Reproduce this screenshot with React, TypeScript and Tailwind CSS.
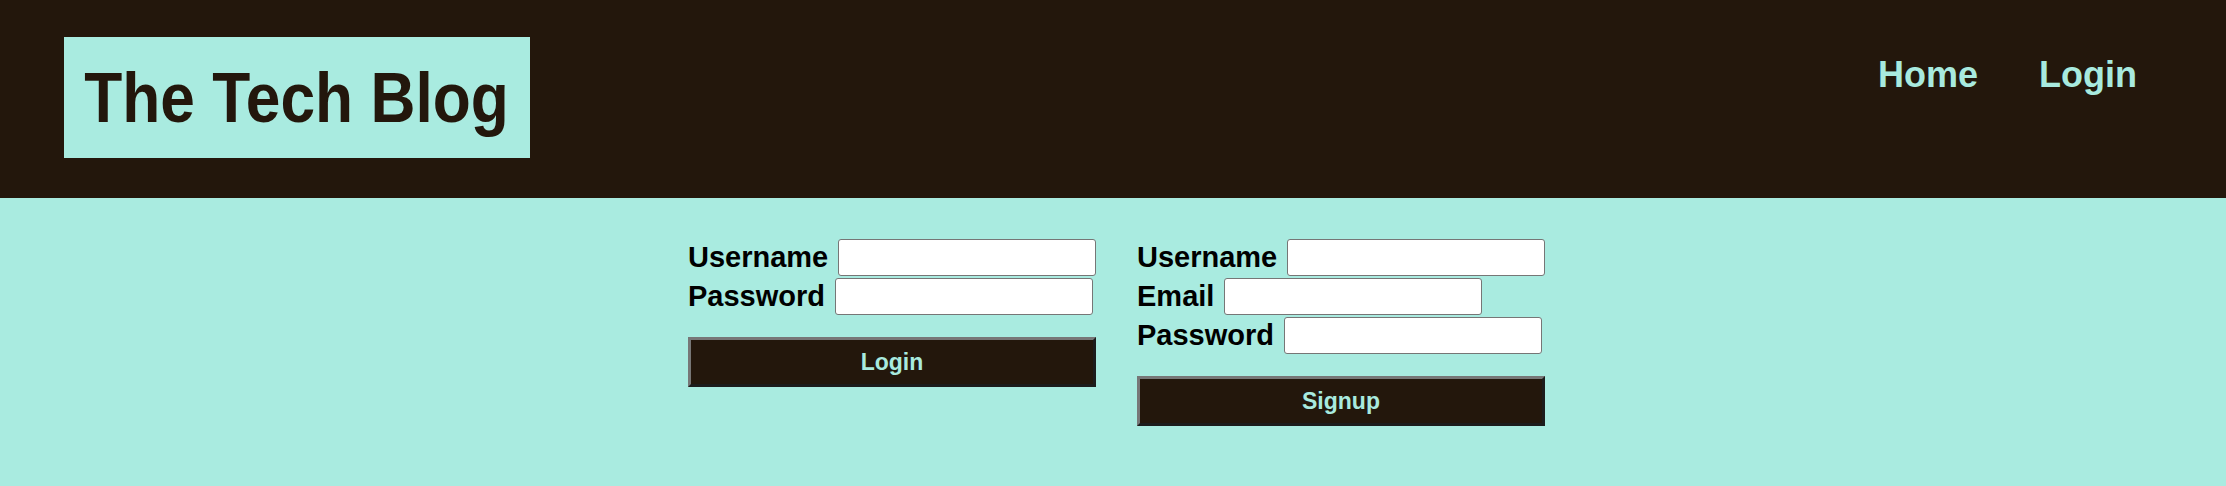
const sans = "font-['Liberation_Sans',Arial,sans-serif]";

function Field({ label, width }: { label: string; width?: string }) {
  return (
    <div className="flex items-center gap-[10px]">
      <label className="text-[29px] font-bold leading-none text-black">{label}</label>
      <input
        type="text"
        className={`h-[37px] ${width ?? "w-[258px]"} rounded-[3px] border border-[#767676] bg-white px-2`}
      />
    </div>
  );
}

function AuthButton({ text }: { text: string }) {
  return (
    <button className="mt-[20px] flex h-[50px] w-[408px] items-center justify-center border-[3px] border-t-[#777777] border-l-[#777777] border-r-[#1c1c1c] border-b-[#1c1c1c] bg-[#23170c] text-[23px] font-bold text-[#a8eadf]">
      {text}
    </button>
  );
}

export default function App() {
  return (
    <div className={`min-h-[486px] bg-[#a9ebe0] ${sans}`}>
      <header className="flex h-[198px] items-start justify-between bg-[#23170c] pl-[64px] pr-[89px] pt-[37px]">
        <div className="flex h-[121px] w-[466px] shrink-0 items-center justify-center bg-[#a9ebe0]">
          <h1 className="shrink-0 scale-x-[0.89] whitespace-nowrap text-[70px] font-bold leading-none text-[#23170c]">
            The Tech Blog
          </h1>
        </div>
        <nav className="mt-[20px] flex gap-[61px] text-[36px] font-bold leading-none text-[#a8eadf]">
          <a href="#">Home</a>
          <a href="#">Login</a>
        </nav>
      </header>
      <main className="flex justify-center gap-[41px] pl-[7px] pt-[41px]">
        <form className="flex w-[408px] flex-col gap-[2px]">
          <Field label="Username" />
          <Field label="Password" />
          <AuthButton text="Login" />
        </form>
        <form className="flex w-[408px] flex-col gap-[2px]">
          <Field label="Username" />
          <Field label="Email" />
          <Field label="Password" />
          <AuthButton text="Signup" />
        </form>
      </main>
    </div>
  );
}
